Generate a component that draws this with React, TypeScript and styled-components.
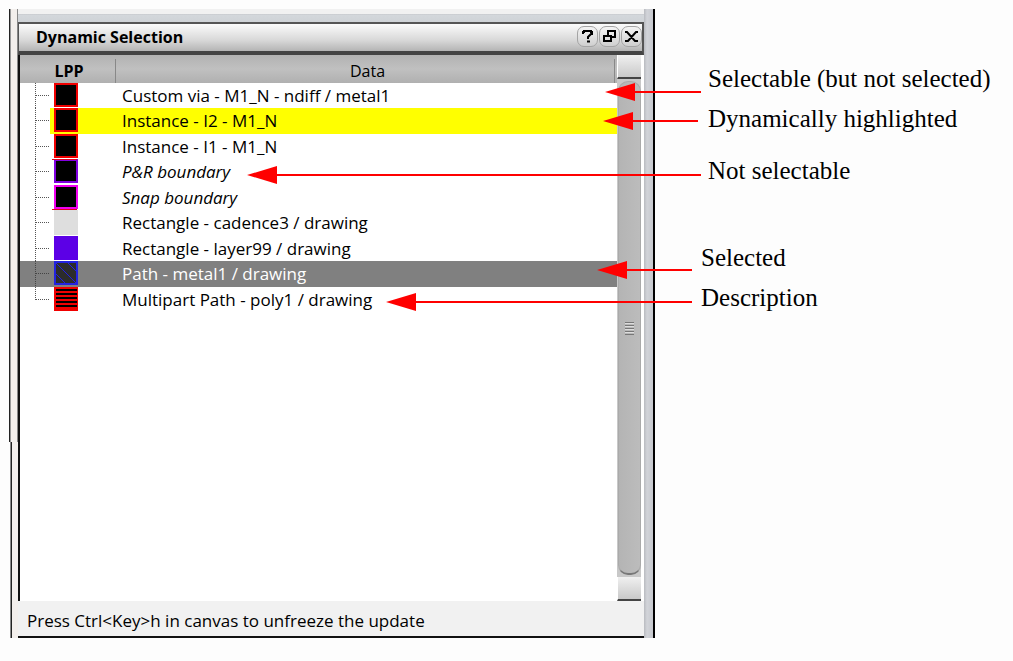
import React from "react";
import styled, { createGlobalStyle, css } from "styled-components";

const GlobalStyle = createGlobalStyle`
  * { box-sizing: border-box; }
  body { margin: 0; background: #fdfdfd; }
`;

const uiFont = '"Open Sans", "Noto Sans", sans-serif';

const Page = styled.main`
  position: relative;
  display: flex;
  align-items: flex-start;
  padding: 9px 0 22px 9px;
`;

const Frame = styled.section`
  display: flex;
  flex: 1 1 auto;
  min-width: 0;
  border-right: 2px solid #000;
  font-family: ${uiFont};
  font-size: 17px;
  line-height: 24px;
  color: #000;
`;

const LeftEdge = styled.div`
  display: flex;
  flex-direction: column;
  width: 9px;
`;

const EdgeUpper = styled.div`
  flex: 0 0 433px;
  border-left: 1px solid #222;
  border-right: 1px solid #888;
  background: linear-gradient(to right, #999 1px, #f3efec 1px);
`;

const EdgeLower = styled.div`
  flex: 1;
  margin-left: 1px;
  border-left: 1px solid #888;
  background: linear-gradient(to right, #222 1px, #f3efec 1px);
`;

const RightEdge = styled.div`
  width: 9px;
  background: linear-gradient(to right, #b9bbc0, #d2d4d9 3px, #c6c8ce);
`;

const Center = styled.div`
  display: flex;
  flex-direction: column;
  flex: 1;
  min-width: 0;
`;

const TopStrip = styled.div`
  height: 13px;
  background: linear-gradient(#f1f1f1 5px, #c4c6ca 5px, #d3d7db 6px, #cfd3d7);
`;

const TitleBar = styled.header`
  display: flex;
  align-items: center;
  justify-content: space-between;
  height: 33px;
  padding: 0 0 2px 17px;
  border: solid #555;
  border-width: 2px 2px 4px 1px;
  border-bottom-color: #444;
  background: linear-gradient(#fbfbfb, #d8d8d8 60%, #b4b4b4);
`;

const Title = styled.h1`
  margin: 0;
  font-size: 16px;
  line-height: 24px;
  font-weight: 700;
`;

const TitleButtons = styled.div`
  display: flex;
  gap: 1px;
`;

const TitleButton = styled.button`
  display: grid;
  place-items: center;
  width: 21px;
  height: 21px;
  padding: 0;
  border: 1px solid #a4a4a4;
  border-radius: 7px;
  background: linear-gradient(#f4f4f4, #cfcfcf);
`;

const Body = styled.div`
  display: flex;
  min-height: 546px;
  border-left: 2px solid #111;
  background: #fff;
`;

const TableArea = styled.div`
  flex: 1;
  min-width: 0;
`;

const Table = styled.table`
  width: 100%;
  table-layout: fixed;
  border-collapse: collapse;
  border-spacing: 0;
`;

const HeadCell = styled.th<{ $lpp?: boolean }>`
  width: ${(p) => (p.$lpp ? "98px" : "auto")};
  height: 28px;
  padding: 3px 0 0;
  font-size: 16px;
  font-weight: ${(p) => (p.$lpp ? 700 : 400)};
  text-align: center;
  background:
    linear-gradient(#888, #888) right 2px bottom 0 / 1px 24px no-repeat,
    linear-gradient(#b2b2b2, #c0c0c0 50%, #b0b0b0);
`;

type RowState = "normal" | "highlighted" | "selected";

const Row = styled.tr<{ $state: RowState }>`
  height: 25px;
  &:nth-child(even) { height: 26px; }
  ${(p) => p.$state === "highlighted" && css`
    background: linear-gradient(to right, transparent 30px, #ff0 30px);
  `}
  ${(p) => p.$state === "selected" && css`
    background: #808080;
    color: #fff;
  `}
`;

const TreeCell = styled.td`
  padding: 0;
  line-height: 0;
  vertical-align: top;
`;

const DataCell = styled.td<{ $italic?: boolean }>`
  padding: 0 0 0 4px;
  font-style: ${(p) => (p.$italic ? "italic" : "normal")};
  white-space: nowrap;
`;

const ScrollBar = styled.div`
  display: flex;
  flex-direction: column;
  width: 27px;
  padding: 0 3px 0 0;
  background: #fff;
`;

const ScrollButton = styled.button`
  height: 24px;
  padding: 0;
  border: 0;
  border-bottom: 2px solid #444;
  border-left: 1px solid #fff;
  background: linear-gradient(#f0f0f0, #c9c9c9);
`;

const Track = styled.div`
  display: flex;
  flex: 1;
  background: #c8c8c8;
`;

const Thumb = styled.div`
  display: grid;
  place-items: center;
  flex: 1;
  margin: 2px 0 2px 1px;
  border: 1px solid #aaa;
  border-bottom: 2px solid #777;
  border-radius: 10px;
  background: linear-gradient(to right, #b4b4b4, #bcbcbc);
`;

const Status = styled.footer`
  height: 37px;
  padding: 8px 8px 0 9px;
  border-bottom: 2px solid #111;
  background: #f1f1f1;
`;

const Callouts = styled.aside`
  display: flex;
  flex-direction: column;
  flex: 0 0 358px;
  gap: 59px;
  padding-top: 56px;
  font-family: "Liberation Serif", "Times New Roman", serif;
  font-size: 25px;
  line-height: 28px;
  color: #000;
`;

const CalloutGroup = styled.div<{ $indent: number }>`
  display: flex;
  flex-direction: column;
  gap: 12px;
  padding-left: ${(p) => p.$indent}px;
`;

const Callout = styled.p<{ $spaced?: boolean }>`
  margin: ${(p) => (p.$spaced ? "12px" : "0")} 0 0;
  white-space: nowrap;
`;

const Arrows = styled.svg`
  position: absolute;
  top: 0;
  right: 311px;
  pointer-events: none;
`;

type Fill = "via" | "boundary" | "snap" | "cadence" | "layer" | "path" | "poly";

const rows: { text: string; fill: Fill; state?: RowState; italic?: boolean }[] = [
  { text: "Custom via - M1_N - ndiff / metal1", fill: "via" },
  { text: "Instance - I2 - M1_N", fill: "via", state: "highlighted" },
  { text: "Instance - I1 - M1_N", fill: "via" },
  { text: "P&R boundary", fill: "boundary", italic: true },
  { text: "Snap boundary", fill: "snap", italic: true },
  { text: "Rectangle - cadence3 / drawing", fill: "cadence" },
  { text: "Rectangle - layer99 / drawing", fill: "layer" },
  { text: "Path - metal1 / drawing", fill: "path", state: "selected" },
  { text: "Multipart Path - poly1 / drawing", fill: "poly" },
];

const outline: Partial<Record<Fill, string>> = {
  via: "#f00000",
  boundary: "#8000e0",
  snap: "#f000f0",
  path: "#2222e0",
};

function Swatch({ fill }: { fill: Fill }) {
  if (fill === "cadence") return <rect x="34" width="24" height="25" fill="#dedede" />;
  if (fill === "layer") return <rect x="34" width="24" height="24" fill="#5c00e6" />;
  if (fill === "poly") {
    return (
      <g>
        <rect x="34" width="24" height="24" fill="#f00000" />
        {[2, 6, 10, 14, 18].map((y) => (
          <rect key={y} x="36" y={y} width="21" height="2" fill="#000" />
        ))}
      </g>
    );
  }
  return (
    <g>
      <rect x="35" y="1" width="22" height="22" fill={fill === "path" ? "#2c2c2c" : "#000"} stroke={outline[fill]} strokeWidth="2" />
      {fill === "path" && (
        <path
          d="M35 12L46 23M36 2L57 23M48 2L57 11"
          stroke="#2222e0"
          strokeWidth="1"
          shapeRendering="geometricPrecision"
        />
      )}
      {fill === "boundary" && <rect x="32" width="25" height="1" fill="#e00020" />}
      {fill === "snap" && <rect x="32" y="24" width="25" height="1" fill="#e00020" />}
    </g>
  );
}

function TreeMark({ fill, last, selected }: { fill: Fill; last: boolean; selected: boolean }) {
  const stroke = selected ? "#444" : "#555";
  return (
    <svg width="96" height="25" viewBox="0 0 96 25" shapeRendering="crispEdges" aria-hidden="true">
      <path d={last ? "M15.5 0V13" : "M15.5 0V25"} stroke={stroke} strokeDasharray="1 1" />
      <path d="M16 12.5H30" stroke={stroke} strokeDasharray="1 1" />
      <Swatch fill={fill} />
    </svg>
  );
}

const arrows = [
  { tip: 605, end: 701, y: 92 },
  { tip: 603, end: 698, y: 121 },
  { tip: 247, end: 701, y: 175 },
  { tip: 597, end: 692, y: 270 },
  { tip: 386, end: 692, y: 302 },
];

export default function App() {
  return (
    <Page>
      <GlobalStyle />
      <Frame>
        <LeftEdge aria-hidden="true">
          <EdgeUpper />
          <EdgeLower />
        </LeftEdge>
        <Center>
          <TopStrip />
          <TitleBar>
            <Title>Dynamic Selection</Title>
            <TitleButtons>
              <TitleButton type="button" aria-label="Help">
                <svg width="15" height="15" viewBox="0 0 15 15" fill="none" stroke="#000" strokeWidth="2">
                  <path d="M3 5V3H4V2H11V3H12V5H11L8 8V10M7 12.5H10" />
                </svg>
              </TitleButton>
              <TitleButton type="button" aria-label="Restore">
                <svg width="15" height="15" viewBox="0 0 15 15" fill="none" stroke="#000" shapeRendering="crispEdges">
                  <path d="M6 6V2H13V8H9" strokeWidth="2" />
                  <path d="M2 7H9V12H2Z" strokeWidth="2" />
                </svg>
              </TitleButton>
              <TitleButton type="button" aria-label="Close">
                <svg width="15" height="15" viewBox="0 0 15 15" fill="none" stroke="#000" strokeWidth="2">
                  <path d="M1 3H3L11 12H14M14 3H12L4 12H1" />
                </svg>
              </TitleButton>
            </TitleButtons>
          </TitleBar>
          <Body>
            <TableArea>
              <Table>
                <thead>
                  <tr>
                    <HeadCell scope="col" $lpp>LPP</HeadCell>
                    <HeadCell scope="col">Data</HeadCell>
                  </tr>
                </thead>
                <tbody>
                  {rows.map((row, i) => (
                    <Row key={row.text} $state={row.state ?? "normal"}>
                      <TreeCell>
                        <TreeMark fill={row.fill} last={i === rows.length - 1} selected={row.state === "selected"} />
                      </TreeCell>
                      <DataCell $italic={row.italic}>{row.text}</DataCell>
                    </Row>
                  ))}
                </tbody>
              </Table>
            </TableArea>
            <ScrollBar>
              <ScrollButton type="button" aria-label="Scroll up" />
              <Track>
                <Thumb>
                  <svg width="10" height="14" viewBox="0 0 10 14" shapeRendering="crispEdges" aria-hidden="true">
                    <path d="M0 1.5H9M0 4.5H9M0 7.5H9M0 10.5H9M0 13.5H9" stroke="#777" />
                    <path d="M0 2.5H9M0 5.5H9M0 8.5H9M0 11.5H9" stroke="#ddd" />
                  </svg>
                </Thumb>
              </Track>
              <ScrollButton type="button" aria-label="Scroll down" />
            </ScrollBar>
          </Body>
          <Status>Press Ctrl&lt;Key&gt;h in canvas to unfreeze the update</Status>
        </Center>
        <RightEdge aria-hidden="true" />
      </Frame>
      <Callouts>
        <CalloutGroup $indent={53}>
          <Callout>Selectable (but not selected)</Callout>
          <Callout>Dynamically highlighted</Callout>
          <Callout $spaced>Not selectable</Callout>
        </CalloutGroup>
        <CalloutGroup $indent={46}>
          <Callout>Selected</Callout>
          <Callout>Description</Callout>
        </CalloutGroup>
      </Callouts>
      <Arrows width="702" height="320" viewBox="0 0 702 320" fill="#f00" aria-hidden="true">
        {arrows.map((a) => (
          <g key={a.y}>
            <rect x={a.tip + 28} y={a.y - 1} width={a.end - a.tip - 28} height="2" />
            <path d={`M${a.tip} ${a.y}L${a.tip + 30} ${a.y - 9}V${a.y + 9}Z`} />
          </g>
        ))}
      </Arrows>
    </Page>
  );
}
